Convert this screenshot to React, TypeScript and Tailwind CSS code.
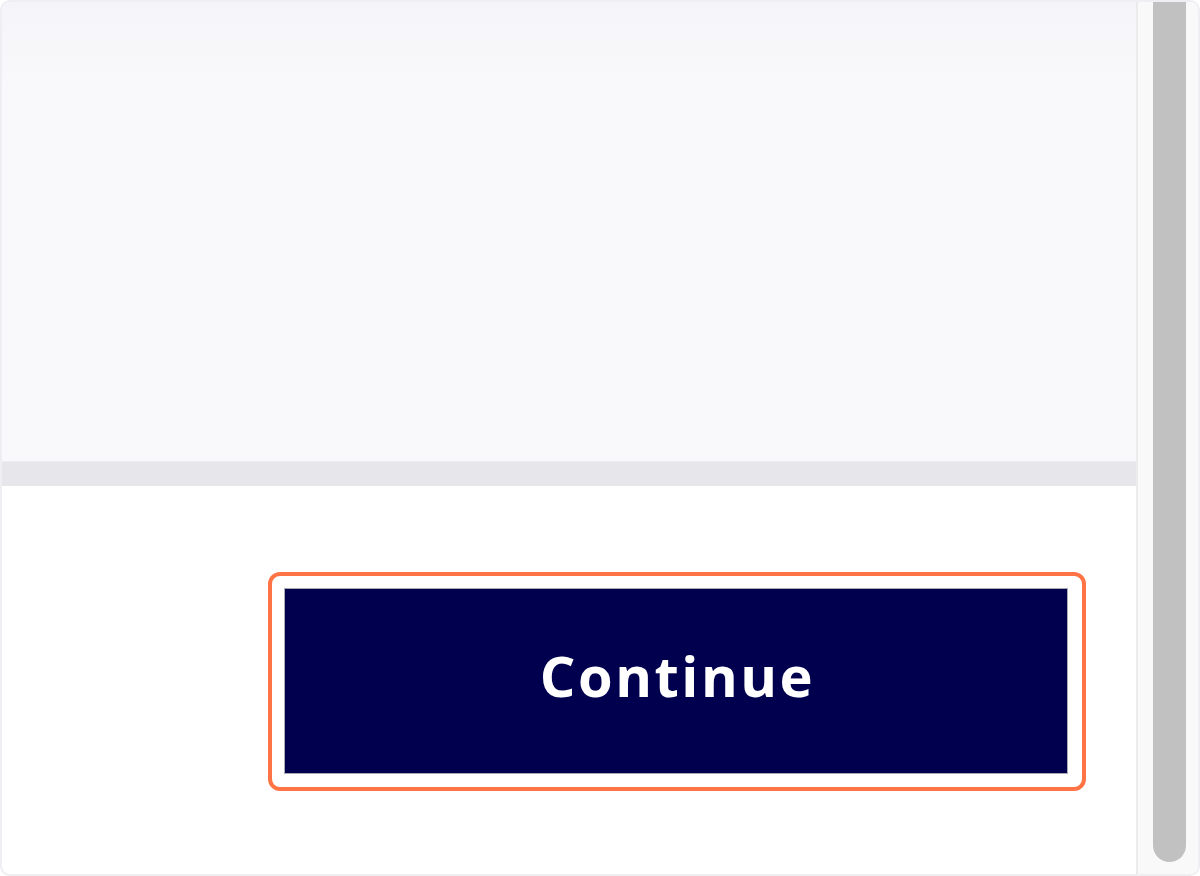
import React from "react";

export default function App() {
  return (
    <div className="w-[1200px] h-[876px] overflow-hidden rounded-[10px] border-2 border-[#eeeef3] bg-white flex">
      <div className="flex-1 flex flex-col">
        <div className="h-[459px] bg-gradient-to-b from-[#f5f5f9] to-[#f9f9fb] to-[18%]" />
        <div className="h-[25px] bg-[#e6e6eb] border-t border-[#ececf0]" />
        <div className="flex-1 flex justify-end pt-[102px] pr-[68px]">
          <div className="relative h-[186px] w-[784px]">
            <button
              className="h-full w-full border border-[#a9a9b4] bg-[#00004f] text-white text-[56px] font-bold leading-none tracking-[2.5px] pb-[12px] pl-[3px]"
              style={{ fontFamily: "'Open Sans', 'Noto Sans', sans-serif" }}
            >
              Continue
            </button>
            <span className="pointer-events-none absolute -left-4 -top-4 -right-[18px] -bottom-[17px] rounded-[12px] border-4 border-[#ff7345]" />
          </div>
        </div>
      </div>
      <div className="w-[62px] border-l-2 border-[#ebebeb] bg-[#f9f9f9] flex flex-col">
        <div className="ml-[15px] w-[33px] h-[860px] rounded-b-full bg-[#c1c1c1]" />
      </div>
    </div>
  );
}
